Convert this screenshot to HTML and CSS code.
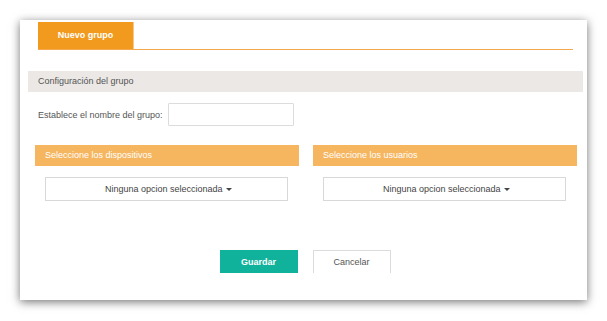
FILE: index.html
```html
<!DOCTYPE html>
<html lang="es">
<head>
  <meta charset="UTF-8" />
  <title>Nuevo grupo</title>
  <link rel="stylesheet" href="styles.css">
</head>
<body>
  <div class="card">
    <div class="tabs">
      <div class="tab active">Nuevo grupo</div>
    </div>

    <div class="section-title">Configuración del grupo</div>

    <div class="form-row">
      <label for="groupName">Establece el nombre del grupo:</label>
      <input type="text" id="groupName">
    </div>

    <div class="columns">
      <div class="column">
        <div class="col-header">Seleccione los dispositivos</div>
        <button class="multi-select">Ninguna opcion seleccionada <span class="caret"></span></button>
      </div>
      <div class="column">
        <div class="col-header">Seleccione los usuarios</div>
        <button class="multi-select">Ninguna opcion seleccionada <span class="caret"></span></button>
      </div>
    </div>

    <div class="actions">
      <button class="btn btn-save">Guardar</button>
      <button class="btn btn-cancel">Cancelar</button>
    </div>
  </div>
</body>
</html>
```

FILE: styles.css
```css
body {
  margin: 0;
  padding: 20px;
  background: #fff;
  font-family: "Liberation Sans", Arial, sans-serif;
  font-size: 9px;
  color: #555;
}
.card {
  width: 567px;
  height: 280px;
  box-sizing: border-box;
  background: #fff;
  padding-top: 2px;
  box-shadow: 0 2px 9px rgba(0, 0, 0, 0.55);
}

/* Tabs */
.tabs {
  display: flex;
  margin: 0 14px 0 18px;
  border-bottom: 1px solid #f4a94f;
}
.tab {
  width: 95px;
  height: 27px;
  line-height: 27px;
  text-align: center;
  font-weight: bold;
  color: #fff;
}
.tab.active {
  background: #f29a1d;
  border-right: 1px solid #f8c68a;
}

.section-title {
  margin: 21px 4px 0 8px;
  height: 21px;
  line-height: 21px;
  padding-left: 10px;
  background: #ece8e5;
  color: #555;
}

.form-row {
  display: flex;
  align-items: center;
  margin-top: 11px;
  padding-left: 18px;
}
.form-row label {
  margin-right: 5px;
  color: #555;
}
.form-row input {
  width: 126px;
  height: 23px;
  box-sizing: border-box;
  border: 1px solid #dcdcdc;
  border-radius: 1px;
}

/* Selection columns */
.columns {
  display: flex;
  gap: 14px;
  margin: 19px 10px 0 15px;
}
.column {
  flex: 1;
}
.col-header {
  height: 21px;
  line-height: 21px;
  padding-left: 10px;
  background: #f5b65f;
  color: #fff;
}
.multi-select {
  display: block;
  width: calc(100% - 21px);
  height: 24px;
  margin: 11px 11px 0 10px;
  border: 1px solid #d8d8d8;
  background: #fff;
  font-family: inherit;
  font-size: 9px;
  color: #444;
  padding: 0 0 0 4px;
}
.caret {
  display: inline-block;
  width: 0;
  height: 0;
  margin-left: 1px;
  vertical-align: 1px;
  border-left: 3px solid transparent;
  border-right: 3px solid transparent;
  border-top: 3px solid #444;
}

/* Buttons */
.actions {
  display: flex;
  justify-content: center;
  gap: 15px;
  margin-top: 49px;
  padding-left: 3px;
}
.btn {
  width: 78px;
  height: 23px;
  font-family: inherit;
  font-size: 9px;
  cursor: pointer;
}
.btn-save {
  background: #10b29b;
  border: 1px solid #10b29b;
  color: #fff;
  font-weight: bold;
}
.btn-cancel {
  background: #fff;
  border: 1px solid #dcdcdc;
  border-bottom: none;
  color: #555;
}
```
